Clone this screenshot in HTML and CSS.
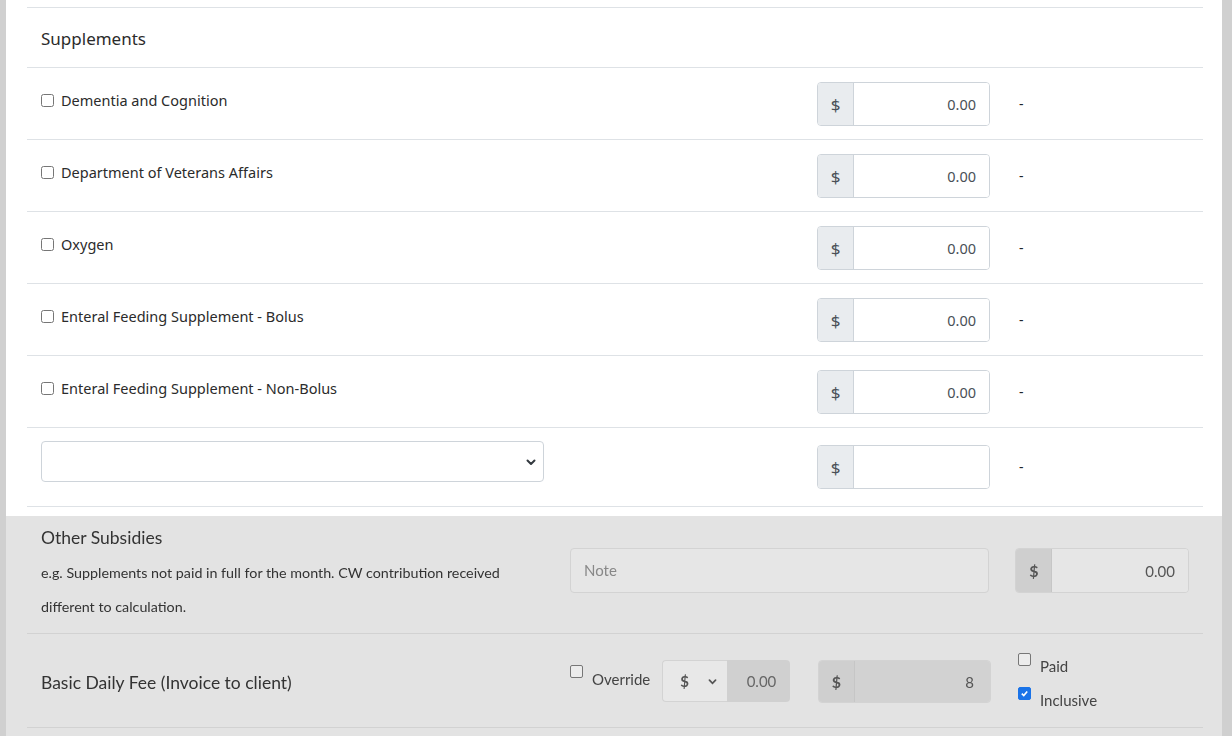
FILE: index.html
```html
<!DOCTYPE html>
<html lang="en">
<head>
  <meta charset="UTF-8">
  <title>Supplements</title>
  <link rel="stylesheet" href="styles.css">
</head>
<body>
  <div class="page">
    <div class="card">
      <div class="section-title">Supplements</div>

      <div class="supp-row">
        <label class="check"><input type="checkbox"> Dementia and Cognition</label>
        <div class="money"><span class="addon">$</span><input class="amount" value="0.00"></div>
        <span class="dash">-</span>
      </div>
      <div class="supp-row">
        <label class="check"><input type="checkbox"> Department of Veterans Affairs</label>
        <div class="money"><span class="addon">$</span><input class="amount" value="0.00"></div>
        <span class="dash">-</span>
      </div>
      <div class="supp-row">
        <label class="check"><input type="checkbox"> Oxygen</label>
        <div class="money"><span class="addon">$</span><input class="amount" value="0.00"></div>
        <span class="dash">-</span>
      </div>
      <div class="supp-row">
        <label class="check"><input type="checkbox"> Enteral Feeding Supplement - Bolus</label>
        <div class="money"><span class="addon">$</span><input class="amount" value="0.00"></div>
        <span class="dash">-</span>
      </div>
      <div class="supp-row">
        <label class="check"><input type="checkbox"> Enteral Feeding Supplement - Non-Bolus</label>
        <div class="money"><span class="addon">$</span><input class="amount" value="0.00"></div>
        <span class="dash">-</span>
      </div>
      <div class="supp-row last">
        <div class="select-box">
          <svg width="10" height="8" viewBox="0 0 10 8"><path d="M1.5 2.5 L5 6 L8.5 2.5" fill="none" stroke="#343a40" stroke-width="2" stroke-linecap="round" stroke-linejoin="round"/></svg>
        </div>
        <div class="money"><span class="addon">$</span><input class="amount" value=""></div>
        <span class="dash">-</span>
      </div>
    </div>

    <div class="locked">
      <div class="locked-row subsidies">
        <div>
          <div class="locked-title">Other Subsidies</div>
          <p class="hint">e.g. Supplements not paid in full for the month. CW contribution received different to calculation.</p>
        </div>
        <div class="note">Note</div>
        <div class="money dim"><span class="addon">$</span><span class="amount">0.00</span></div>
      </div>

      <div class="locked-row fee">
        <div class="locked-title fee-title">Basic Daily Fee (Invoice to client)</div>
        <div class="override">
          <span class="box"></span>
          <span class="override-text">Override</span>
          <div class="unit">$
            <svg width="9" height="7" viewBox="0 0 10 8"><path d="M1.5 2.5 L5 6 L8.5 2.5" fill="none" stroke="#555" stroke-width="2" stroke-linecap="round"/></svg>
          </div>
          <span class="unit-value">0.00</span>
        </div>
        <div class="money dim off"><span class="addon">$</span><span class="amount">8</span></div>
        <div class="flags">
          <div class="flag"><span class="box"></span>Paid</div>
          <div class="flag"><span class="box on"><svg width="9" height="9" viewBox="0 0 10 10"><path d="M2 5.2 L4.2 7.3 L8 2.8" fill="none" stroke="#fff" stroke-width="1.8"/></svg></span>Inclusive</div>
        </div>
      </div>
    </div>
  </div>
</body>
</html>
```

FILE: styles.css
```css
body {
  margin: 0;
  background: #d0d0d0;
  font-family: "Segoe UI", "Noto Sans", sans-serif;
  color: #212529;
}

.page {
  margin: 0 10px 0 6px;
  height: 736px;
  overflow: hidden;
  background: #fff;
}

.card {
  background: #fff;
  padding: 7px 19px 9px 21px;
}

.section-title {
  border-top: 1px solid #dee2e6;
  height: 60px;
  box-sizing: border-box;
  padding: 19px 14px 0;
  font-size: 17px;
  line-height: 24px;
  color: #2b2b2b;
}

.supp-row {
  border-top: 1px solid #dee2e6;
  padding: 14px 14px 13px;
  display: grid;
  grid-template-columns: 750px 173px auto;
  column-gap: 26px;
  align-items: start;
}
.supp-row.last {
  padding: 13px 14px 17px;
  border-bottom: 1px solid #dee2e6;
  grid-template-columns: 503px 221px 173px auto;
}
.supp-row.last .money { grid-column: 3; margin-top: 4px; }
.supp-row.last .dash { margin-top: 4px; }

.check {
  display: flex;
  align-items: center;
  gap: 7px;
  margin-top: 7px;
  font-size: 14.5px;
  line-height: 22px;
  color: #2b2b2b;
}
.check input {
  margin: 0;
  width: 13px;
  height: 13px;
}

.money {
  display: flex;
  height: 44px;
  border: 1px solid #ced4da;
  border-radius: 4px;
  box-sizing: border-box;
  overflow: hidden;
}
.addon {
  width: 35px;
  flex: none;
  background: #e9ecef;
  border-right: 1px solid #ced4da;
  display: flex;
  align-items: center;
  justify-content: center;
  font-size: 17px;
  color: #495057;
}
.amount {
  flex: 1;
  min-width: 0;
  border: 0;
  padding: 0 13px 0 0;
  text-align: right;
  font: 14.5px "Segoe UI", "Noto Sans", sans-serif;
  color: #495057;
  background: #fff;
  outline: none;
}
.dash {
  line-height: 44px;
  margin-left: 3px;
  font-size: 14px;
  color: #212529;
}

.select-box {
  height: 41px;
  border: 1px solid #ced4da;
  border-radius: 4px;
  box-sizing: border-box;
  display: flex;
  align-items: center;
  justify-content: flex-end;
  padding-right: 7px;
}

/* grey, read-only part of the form */
.locked {
  background: #e3e3e3;
  padding: 0 19px 0 21px;
  height: 220px;
  filter: blur(0.6px);
  font-family: Lato, "Noto Sans", sans-serif;
  color: #3c3c3c;
}
.locked-row {
  border-bottom: 1px solid #d2d2d2;
  padding: 0 14px;
  display: flex;
  box-sizing: border-box;
}
.locked-row.subsidies {
  height: 118px;
  padding-top: 10px;
}
.locked-row.subsidies > div:first-child { width: 503px; }
.locked-title {
  font-size: 17.5px;
  line-height: 24px;
  color: #333;
}
.hint {
  margin: 6px 0 0;
  width: 503px;
  font-size: 14.3px;
  line-height: 34px;
  color: #333;
}
.note {
  width: 420px;
  height: 45px;
  margin: 22px 0 0 26px;
  box-sizing: border-box;
  border: 1px solid #d3d3d3;
  border-radius: 4px;
  background: #e6e6e6;
  padding-left: 13px;
  line-height: 43px;
  font-size: 15px;
  color: #888;
}
.locked .money {
  border-color: #d3d3d3;
  height: 45px;
}
.locked .money.dim {
  width: 174px;
  margin: 22px 0 0 26px;
}
.locked .addon {
  background: #cfcfcf;
  border-right-color: #c6c6c6;
  color: #555;
  font-weight: bold;
  font-size: 16px;
}
.locked .amount {
  display: flex;
  align-items: center;
  justify-content: flex-end;
  background: #e6e6e6;
  font: 15px Lato, "Noto Sans", sans-serif;
  color: #555;
}

.locked-row.fee {
  height: 94px;
  padding-top: 26px;
}
.fee-title {
  width: 503px;
  margin-top: 11px;
}
.override {
  display: flex;
  align-items: flex-start;
  margin-left: 26px;
  width: 221px;
}
.box {
  width: 11px;
  height: 11px;
  border: 1px solid #777;
  border-radius: 2px;
  background: #ececec;
  flex: none;
  display: flex;
  align-items: center;
  justify-content: center;
}
.override .box { margin-top: 5px; }
.override-text {
  margin: 10px 0 0 9px;
  font-size: 15px;
  color: #444;
}
.unit {
  margin-left: 12px;
  width: 65px;
  height: 42px;
  box-sizing: border-box;
  border: 1px solid #d3d3d3;
  border-right: 0;
  border-radius: 4px 0 0 4px;
  background: #e8e8e8;
  display: flex;
  align-items: center;
  justify-content: space-between;
  padding: 0 10px 0 17px;
  font-weight: bold;
  font-size: 15px;
  color: #555;
}
.unit-value {
  width: 63px;
  height: 42px;
  background: #d0d0d0;
  border-radius: 0 4px 4px 0;
  line-height: 42px;
  text-align: right;
  padding-right: 14px;
  box-sizing: border-box;
  font-size: 15px;
  color: #666;
}
.locked .money.off {
  width: 173px;
  height: 43px;
  margin: 0 0 0 27px;
}
.money.off .amount {
  background: #d2d2d2;
  padding-right: 16px;
  color: #555;
}
.flags {
  margin: -5px 0 0 27px;
}
.flag {
  display: flex;
  align-items: flex-start;
  height: 34px;
  line-height: 22px;
  font-size: 15px;
  color: #444;
  gap: 9px;
}
.flag .box { margin-top: -2px; }
.flag .box.on {
  background: #1a73e8;
  border-color: #1a73e8;
}
```
